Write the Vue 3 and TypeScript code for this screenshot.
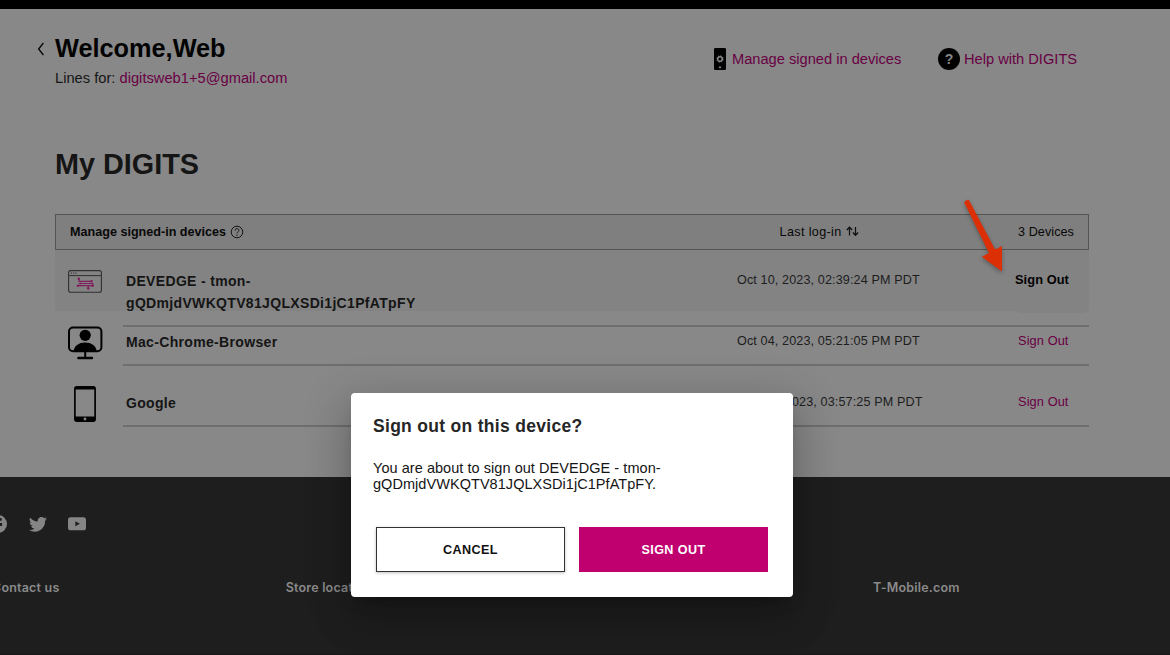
<script setup lang="ts">
interface Device {
  name: string
  login: string
  kind: 'web' | 'desktop' | 'phone'
  active?: boolean
}

const devices: Device[] = [
  { name: 'DEVEDGE - tmon-gQDmjdVWKQTV81JQLXSDi1jC1PfATpFY', login: 'Oct 10, 2023, 02:39:24 PM PDT', kind: 'web', active: true },
  { name: 'Mac-Chrome-Browser', login: 'Oct 04, 2023, 05:21:05 PM PDT', kind: 'desktop' },
  { name: 'Google', login: 'Aug 31, 2023, 03:57:25 PM PDT', kind: 'phone' },
]
const footerLinks = ['Contact us', 'Store locator', 'Coverage', 'T-Mobile.com']
</script>

<template>
  <div class="page">
    <div class="topbar"></div>
    <main class="content">
      <header class="header">
        <svg class="back" width="8" height="14" viewBox="0 0 8 14"><path d="M6.4 1 1.6 7l4.8 6" fill="none" stroke="#050505" stroke-width="1.3" /></svg>
        <div class="greeting">
          <h1>Welcome,Web</h1>
          <p>Lines for: <a>digitsweb1+5@gmail.com</a></p>
        </div>
        <nav class="actions">
          <a class="manage">
            <svg width="12" height="22" viewBox="0 0 12 22">
              <rect width="12" height="22" rx="1.2" fill="#020202" />
              <circle cx="6" cy="11" r="2.3" fill="none" stroke="#858585" stroke-width="1.5" />
              <circle cx="6" cy="11" r="3.2" fill="none" stroke="#858585" stroke-width="1" stroke-dasharray="1.2 1.31" />
              <circle cx="6" cy="19.3" r="1.1" fill="#858585" />
            </svg>
            <span>Manage signed in devices</span>
          </a>
          <a class="help"><span class="help-icon">?</span><span>Help with DIGITS</span></a>
        </nav>
      </header>

      <h2>My DIGITS</h2>

      <section class="devices">
        <div class="table-head">
          <strong>Manage signed-in devices</strong>
          <svg class="info" width="14" height="14" viewBox="0 0 14 14">
            <circle cx="7" cy="7" r="5.8" fill="none" stroke="#161616" />
            <path d="M5.1 5.6c0-2.7 3.8-2.5 3.8-.2 0 1.4-1.9 1.5-1.9 3" fill="none" stroke="#161616" />
            <circle cx="7" cy="10.2" r=".65" fill="#161616" />
          </svg>
          <span class="sort">Last log-in
            <svg width="13" height="11" viewBox="0 0 13 11"><path d="M3.5 9.500V1.300M.8 4l2.700-2.800L6.200 4M9.500 1v8.200M6.800 6.500l2.700 2.800 2.700-2.800" fill="none" stroke="#111" stroke-width="1.25" /></svg>
          </span>
          <span class="count">3 Devices</span>
        </div>

        <div v-for="device in devices" :key="device.name" class="row" :class="device.kind">
          <div class="icon">
            <svg v-if="device.kind === 'web'" width="34" height="23" viewBox="0 0 34 23">
              <rect x=".6" y=".6" width="32.8" height="21.6" rx="2" fill="none" stroke="#303030" stroke-width="1.1" />
              <path d="M1 5.6h32" stroke="#303030" />
              <path d="M3 3.1h1m1.2 0h1m1.2 0h1" stroke="#303030" stroke-width="1.1" />
              <path d="M11 9v2.300h12.500M10.300 15.700h10v2.600M12.500 13.500h12.200v2.300M20.500 15.700h4" fill="none" stroke="#801f5e" stroke-width="1.2" />
              <g fill="#801f5e"><circle cx="10.800" cy="8.800" r="1.300" /><circle cx="23.500" cy="11.300" r="1.300" /><circle cx="12.200" cy="13.500" r="1.100" /><circle cx="10" cy="15.700" r="1.300" /><circle cx="20.300" cy="18.400" r="1.300" /><circle cx="24.700" cy="15.800" r="1.200" /></g>
            </svg>
            <svg v-else-if="device.kind === 'desktop'" width="36" height="34" viewBox="0 0 36 34">
              <rect x="1" y="1.500" width="32.400" height="23.800" rx="4" fill="none" stroke="#020202" stroke-width="2" />
              <circle cx="17.200" cy="9.300" r="5.600" />
              <path d="M5.600 26c.2-6.300 5.200-9.600 11.600-9.600S28.600 19.700 28.800 26zM16.200 25h2v7h-2z" />
              <path d="M10.400 32h13.600" stroke="#020202" stroke-width="2.400" stroke-linecap="round" />
            </svg>
            <svg v-else width="22" height="36" viewBox="0 0 22 36">
              <rect x=".9" y=".9" width="20.200" height="34.200" rx="1.800" fill="none" stroke="#020202" stroke-width="1.700" />
              <path d="M1 1h20v2.600H1zM1 30.400h20V35H1z" />
              <circle cx="11" cy="33" r="1.400" fill="#888" />
            </svg>
          </div>
          <div class="name">{{ device.name }}</div>
          <time>{{ device.login }}</time>
          <div class="signout" :class="{ active: device.active }"><a>Sign Out</a></div>
        </div>
      </section>
    </main>

    <footer>
      <div class="social">
        <svg width="18" height="18" viewBox="0 0 18 18"><circle cx="9" cy="9" r="9" fill="#858585" /><path d="M7.500 18V11H5V8h2.500V6C7.500 3.700 9 2.800 12.700 3.200v2.600c-2-.1-2.200.1-2.200 1.100V8h2.600v3h-2.600v7z" fill="#1e1e1e" /></svg>
        <svg width="18" height="15" viewBox="0 0 24 20"><path d="M24 2.400a10 10 0 0 1-2.800.8A5 5 0 0 0 23.300.4a10 10 0 0 1-3.100 1.200 4.900 4.900 0 0 0-8.400 4.500A14 14 0 0 1 1.700.9a4.900 4.900 0 0 0 1.500 6.600 5 5 0 0 1-2.200-.6 4.900 4.900 0 0 0 3.900 4.900 5 5 0 0 1-2.200.1 4.900 4.900 0 0 0 4.600 3.400A9.900 9.900 0 0 1 0 17.300 14 14 0 0 0 21.500 4.900 10 10 0 0 0 24 2.400z" fill="#858585" /></svg>
        <svg width="18" height="14" viewBox="0 0 18 14"><rect y=".3" width="18" height="13" rx="2.600" fill="#858585" /><path d="M7.300 4.200v5l4.600-2.500z" fill="#1e1e1e" /></svg>
      </div>
      <div class="links"><a v-for="link in footerLinks" :key="link">{{ link }}</a></div>
    </footer>

    <div class="dialog" role="dialog">
      <h3>Sign out on this device?</h3>
      <p>You are about to sign out DEVEDGE - tmon-<br />gQDmjdVWKQTV81JQLXSDi1jC1PfATpFY.</p>
      <div class="buttons">
        <button class="cancel">CANCEL</button>
        <button class="confirm">SIGN OUT</button>
      </div>
    </div>

    <svg class="arrow" width="60" height="90" viewBox="0 0 60 90">
      <path d="M14.200 11.400q1.200-2.700 4.700-2.400L45.100 58.600 52 55V80.500L31.800 65.800l7.200-3.700z" fill="#dd2f05" />
    </svg>
  </div>
</template>

<style>
body { margin: 0; overflow: hidden; }
</style>

<style scoped>
* { box-sizing: border-box; }
.page {
  position: relative;
  width: 1170px;
  height: 655px;
  overflow: hidden;
  display: flex;
  flex-direction: column;
  background: #888;
  font-family: "Liberation Sans", Arial, sans-serif;
  color: #151515;
}
.topbar { height: 9px; flex: none; background: #000; }
.content { height: 468px; flex: none; padding: 0 81px 0 37px; }
h1, h2, h3, p { margin: 0; }
a { color: #690043; }
.header { display: flex; height: 131px; padding-top: 24px; }
.back { margin-top: 9px; flex: none; }
.greeting { margin-left: 10px; width: 659px; }
h1 { font-size: 25.3px; line-height: 30px; color: #020202; }
.greeting p { margin-top: 6px; font-size: 14.65px; line-height: 18px; letter-spacing: .02px; }
.actions { display: flex; height: 50px; margin-top: 1px; font-size: 14.65px; }
.actions a { display: flex; align-items: center; height: 50px; white-space: nowrap; }
.manage { width: 224px; gap: 6px; }
.help { gap: 4px; }
.help-icon { width: 22px; height: 22px; border-radius: 50%; background: #020202; color: #858585; font: bold 14px/22px "Liberation Sans", sans-serif; text-align: center; }
h2 { margin-left: 18px; height: 74px; padding-top: 6px; font-size: 28.8px; line-height: 36px; }
.devices { margin-left: 18px; width: 1034px; }
.table-head {
  display: flex;
  align-items: center;
  height: 36px;
  padding: 0 14px;
  border: 1px solid #555;
  background: #7f7f7f;
  font-size: 12.6px;
  color: #080808;
}
.info { margin: 0 0 0 4px; }
.sort { display: flex; align-items: center; gap: 4px; margin-left: 535.5px; letter-spacing: .36px; white-space: nowrap; }
.sort svg { margin-bottom: 1px; }
.count { margin-left: auto; letter-spacing: .07px; }
.row { display: grid; grid-template-columns: 68px 612px 267px 87px; height: 61px; }
.icon { display: flex; justify-content: center; padding-right: 8px; height: 0; }
.icon svg { flex: none; }
.name { height: 61px; padding: 1px 0 0 3px; width: 340px; font-weight: bold; font-size: 14px; line-height: 21.5px; letter-spacing: .33px; }
time { padding-left: 2px; font-size: 12.6px; line-height: 20px; letter-spacing: .12px; color: #1d1d1d; }
.signout { padding-right: 20.5px; text-align: right; font-size: 12.8px; line-height: 20px; letter-spacing: .08px; white-space: nowrap; }
.signout.active a { color: #020202; font-weight: bold; }
.web { background: #838383; padding-top: 20px; }
.web .name { height: 41px; }
.web .signout { height: 43px; background: #838383; margin-left: 13px; border-radius: 0 0 6px 6px; }
.desktop { position: relative; height: 55px; padding-top: 20px; }
.desktop .icon { margin-top: -5px; padding-right: 7px; }
.phone { position: relative; height: 61px; padding-top: 26px; }
.phone .icon { margin-top: -6px; }
.phone time { padding-left: 2px; }
.desktop::before, .desktop::after, .phone::after { content: ""; position: absolute; right: 0; left: 68px; height: 2px; background: #6e6e6e; }
.desktop::before { top: 14px; }
.desktop::after { top: 53px; }
.phone::after { bottom: 0; }
footer { flex: 1; background: #1e1e1e; color: #858585; border-bottom: 1px solid #171717; }
.social { display: flex; align-items: center; height: 20px; margin: 37px 0 0 -11px; }
.social svg { margin-right: 22px; }
.social svg:nth-child(2) { margin-right: 21px; }
.links { display: grid; grid-template-columns: 293.7px 293.7px 293.7px 293.7px; margin: 45px 0 0 -8px; font: 600 12.5px/18px Inter, sans-serif; letter-spacing: .2px; }
.links a { color: #8a8a8a; }
.dialog {
  position: absolute;
  left: 351px;
  top: 393px;
  width: 442px;
  height: 204px;
  padding: 22px 22px 0;
  border-radius: 4px;
  background: #fff;
  box-shadow: 0 11px 15px -7px rgba(0, 0, 0, .2), 0 24px 38px 3px rgba(0, 0, 0, .14), 0 9px 46px 8px rgba(0, 0, 0, .12);
}
h3 { font-size: 17.5px; line-height: 22px; letter-spacing: .3px; color: #262626; }
.dialog p { margin-top: 23px; font-size: 14.5px; line-height: 16px; letter-spacing: .05px; color: #151515; }
.buttons { display: flex; gap: 14px; margin: 35px 0 0 3px; }
button { width: 189px; height: 45px; padding: 0; border: 0; font: bold 12.6px "Liberation Sans", sans-serif; letter-spacing: .4px; }
.cancel { background: #fff; border: 1px solid #333; color: #111; box-shadow: 0 1px 3px rgba(0, 0, 0, .25); }
.confirm { background: #c1006f; color: #fff; }
.arrow { position: absolute; left: 950px; top: 191px; filter: drop-shadow(0 2px 2px rgba(0, 0, 0, .3)); }
</style>
